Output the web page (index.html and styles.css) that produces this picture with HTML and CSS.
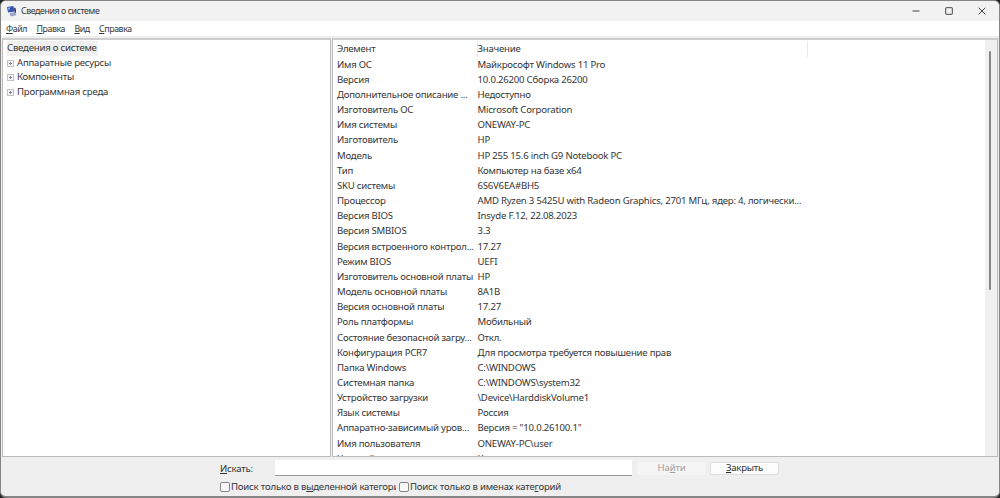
FILE: index.html
```html
<!DOCTYPE html>
<html lang="ru">
<head>
    <meta charset="UTF-8">
    <meta name="viewport" content="width=device-width, initial-scale=1.0">
    <title>Сведения о системе</title>
    <link rel="stylesheet" href="styles.css">
</head>
<body>
    <div class="window">
        <header class="titlebar">
            <svg class="app-icon" width="11" height="12" viewBox="0 0 11 12">
                <path d="M1 2 7.500 1 8.200 6.500 2 7.500Z" fill="#3151b5"/>
                <path d="M1.800 2.700 4.500 2.200 2.800 6Z" fill="#8db5ee"/>
                <path d="M4 8 9 7 10.500 10 6 11.500 3.500 10Z" fill="#9aa6c4"/>
                <path d="M8 2.500 9.800 3.500 10 8 8.500 7Z" fill="#222d69"/>
            </svg>
            <h1 class="title">Сведения о системе</h1>
            <div class="window-controls">
                <svg width="8" height="8" viewBox="0 0 8 8"><path d="M.5 4H7.500"/></svg>
                <svg width="8" height="8" viewBox="0 0 8 8"><rect x=".7" y=".7" width="6.600" height="6.600" rx=".4"/></svg>
                <svg width="8" height="8" viewBox="0 0 8 8"><path d="M.7 .7 7.300 7.300M7.300 .7 .7 7.300"/></svg>
            </div>
        </header>

        <nav class="menu">
            <span><u>Ф</u>айл</span>
            <span><u>П</u>равка</span>
            <span><u>В</u>ид</span>
            <span><u>С</u>правка</span>
        </nav>

        <main class="panes">
            <!-- Дерево категорий -->
            <section class="tree">
                <div class="tree-root">Сведения о системе</div>
                <div class="tree-item"><i class="plus"></i>Аппаратные ресурсы</div>
                <div class="tree-item"><i class="plus"></i>Компоненты</div>
                <div class="tree-item"><i class="plus"></i>Программная среда</div>
            </section>

            <!-- Список параметров -->
            <section class="details">
                <div class="list">
                    <div class="row head"><span>Элемент</span><span>Значение</span></div>
                    <div class="row"><span>Имя ОС</span><span>Майкрософт Windows 11 Pro</span></div>
                    <div class="row"><span>Версия</span><span>10.0.26200 Сборка 26200</span></div>
                    <div class="row"><span>Дополнительное описание ...</span><span>Недоступно</span></div>
                    <div class="row"><span>Изготовитель ОС</span><span>Microsoft Corporation</span></div>
                    <div class="row"><span>Имя системы</span><span>ONEWAY-PC</span></div>
                    <div class="row"><span>Изготовитель</span><span>HP</span></div>
                    <div class="row"><span>Модель</span><span>HP 255 15.6 inch G9 Notebook PC</span></div>
                    <div class="row"><span>Тип</span><span>Компьютер на базе x64</span></div>
                    <div class="row"><span>SKU системы</span><span>6S6V6EA#BH5</span></div>
                    <div class="row"><span>Процессор</span><span>AMD Ryzen 3 5425U with Radeon Graphics, 2701 МГц, ядер: 4, логически...</span></div>
                    <div class="row"><span>Версия BIOS</span><span>Insyde F.12, 22.08.2023</span></div>
                    <div class="row"><span>Версия SMBIOS</span><span>3.3</span></div>
                    <div class="row"><span>Версия встроенного контрол...</span><span>17.27</span></div>
                    <div class="row"><span>Режим BIOS</span><span>UEFI</span></div>
                    <div class="row"><span>Изготовитель основной платы</span><span>HP</span></div>
                    <div class="row"><span>Модель основной платы</span><span>8A1B</span></div>
                    <div class="row"><span>Версия основной платы</span><span>17.27</span></div>
                    <div class="row"><span>Роль платформы</span><span>Мобильный</span></div>
                    <div class="row"><span>Состояние безопасной загру...</span><span>Откл.</span></div>
                    <div class="row"><span>Конфигурация PCR7</span><span>Для просмотра требуется повышение прав</span></div>
                    <div class="row"><span>Папка Windows</span><span>C:\WINDOWS</span></div>
                    <div class="row"><span>Системная папка</span><span>C:\WINDOWS\system32</span></div>
                    <div class="row"><span>Устройство загрузки</span><span>\Device\HarddiskVolume1</span></div>
                    <div class="row"><span>Язык системы</span><span>Россия</span></div>
                    <div class="row"><span>Аппаратно-зависимый уров...</span><span>Версия = "10.0.26100.1"</span></div>
                    <div class="row"><span>Имя пользователя</span><span>ONEWAY-PC\user</span></div>
                    <div class="row"><span>Часовой пояс</span><span>Калининградское время</span></div>
                </div>
                <div class="scrollbar"><div class="thumb"></div></div>
            </section>
        </main>

        <footer class="search">
            <div class="search-line">
                <label class="search-label" for="query"><u>И</u>скать:</label>
                <input class="query" id="query" type="text">
                <button class="btn" disabled>На<u>й</u>ти</button>
                <button class="btn"><u>З</u>акрыть</button>
            </div>
            <div class="options">
                <label class="option"><input type="checkbox"><span>Поиск только в в<u>ы</u>деленной категории</span></label>
                <label class="option"><input type="checkbox"><span>Поиск только в именах кате<u>г</u>орий</span></label>
            </div>
        </footer>
    </div>
</body>
</html>
```

FILE: styles.css
```css
* {
    box-sizing: border-box;
}

body {
    margin: 0;
    height: 498px;
    overflow: hidden;
    background: #242424;
    color: #353535;
    font-family: "Noto Sans", "Open Sans", sans-serif;
    font-size: 9.6px;
    letter-spacing: -0.22px;
}

.window {
    display: flex;
    flex-direction: column;
    height: 498px;
    border: 1px solid #858585;
    border-bottom-width: 2px;
    border-radius: 6px;
    background: #efefef;
    overflow: hidden;
}

.titlebar {
    display: flex;
    align-items: center;
    height: 20px;
    padding: 0 13px 0 5px;
    background: #f2f2f2;
}

.title {
    margin: 0 auto 0 4px;
    font-size: 8.8px;
    font-weight: 400;
    letter-spacing: -0.42px;
}

.window-controls {
    display: flex;
    gap: 25px;
}

.window-controls svg {
    fill: none;
    stroke: #454545;
    stroke-width: 1;
}

.menu {
    display: flex;
    gap: 9.3px;
    height: 15px;
    padding-left: 5px;
    background: #fff;
    font-size: 8.8px;
    letter-spacing: -0.4px;
    line-height: 16px;
}

u {
    text-underline-offset: 1px;
    text-decoration-thickness: 1px;
}

.panes {
    display: flex;
    gap: 1px;
    height: 421px;
    padding: 2px 1px 0;
}

.tree,
.details {
    border: 1px solid #bcbcbc;
    border-top: 2px solid #cdcdcd;
    background: #fff;
    overflow: hidden;
}

.tree {
    width: 329px;
    padding: 1px 4px;
    line-height: 14.7px;
}

.tree-root {
    width: 91px;
    background: #f0f0f0;
    white-space: nowrap;
}

.tree-item {
    display: flex;
    align-items: center;
}

.plus {
    width: 7px;
    height: 7px;
    margin-right: 3px;
    border: 1px solid #c2c2c2;
    background: linear-gradient(#7a84a8, #7a84a8) center / 3px 1px no-repeat,
        linear-gradient(#7a84a8, #7a84a8) center / 1px 3px no-repeat, #f5f5f5;
}

.details {
    display: flex;
    flex: 1;
}

.list {
    flex: 1;
    padding-top: 1px;
}

.row {
    display: grid;
    grid-template-columns: 140.5px 330px;
    height: 15.17px;
    padding-left: 4px;
    line-height: 15.17px;
    white-space: nowrap;
}

.head {
    height: 15.7px;
    line-height: 15.7px;
}

.head span {
    border-right: 1px solid #e9e9e9;
}

.scrollbar {
    width: 12px;
    padding: 11px 0 0 4px;
    background: #f0f0f0;
}

.thumb {
    width: 2px;
    height: 239px;
    border-radius: 1px;
    background: #858585;
}

.search {
    padding: 3px 0 0 219px;
}

.search-line {
    display: flex;
    height: 16px;
    align-items: center;
}

.search-label {
    width: 55px;
}

.query {
    width: 357px;
    height: 16px;
    margin-right: 5px;
    border: 0;
    border-bottom: 1px solid #999;
    background: #fff;
}

.btn {
    width: 69px;
    height: 13px;
    margin-right: 4px;
    padding: 0;
    border: 1px solid #dcdcdc;
    border-radius: 2px;
    background: #fdfdfd;
    color: #303030;
    font: inherit;
    letter-spacing: inherit;
    line-height: 10px;
}

.btn:disabled {
    border-color: #f4f4f4;
    background: #f5f5f5;
    color: #a0a0a0;
}

.options {
    display: flex;
    gap: 3px;
    margin-top: 3px;
    letter-spacing: -0.2px;
}

.option {
    display: flex;
    align-items: center;
    width: 176px;
    height: 15px;
    overflow: hidden;
    white-space: nowrap;
}

.option input {
    flex: none;
    width: 10px;
    height: 10px;
    margin: 0 1px 0 0;
    border: 1px solid #858585;
    border-radius: 2px;
    background: #f8f8f8;
    appearance: none;
}
```
